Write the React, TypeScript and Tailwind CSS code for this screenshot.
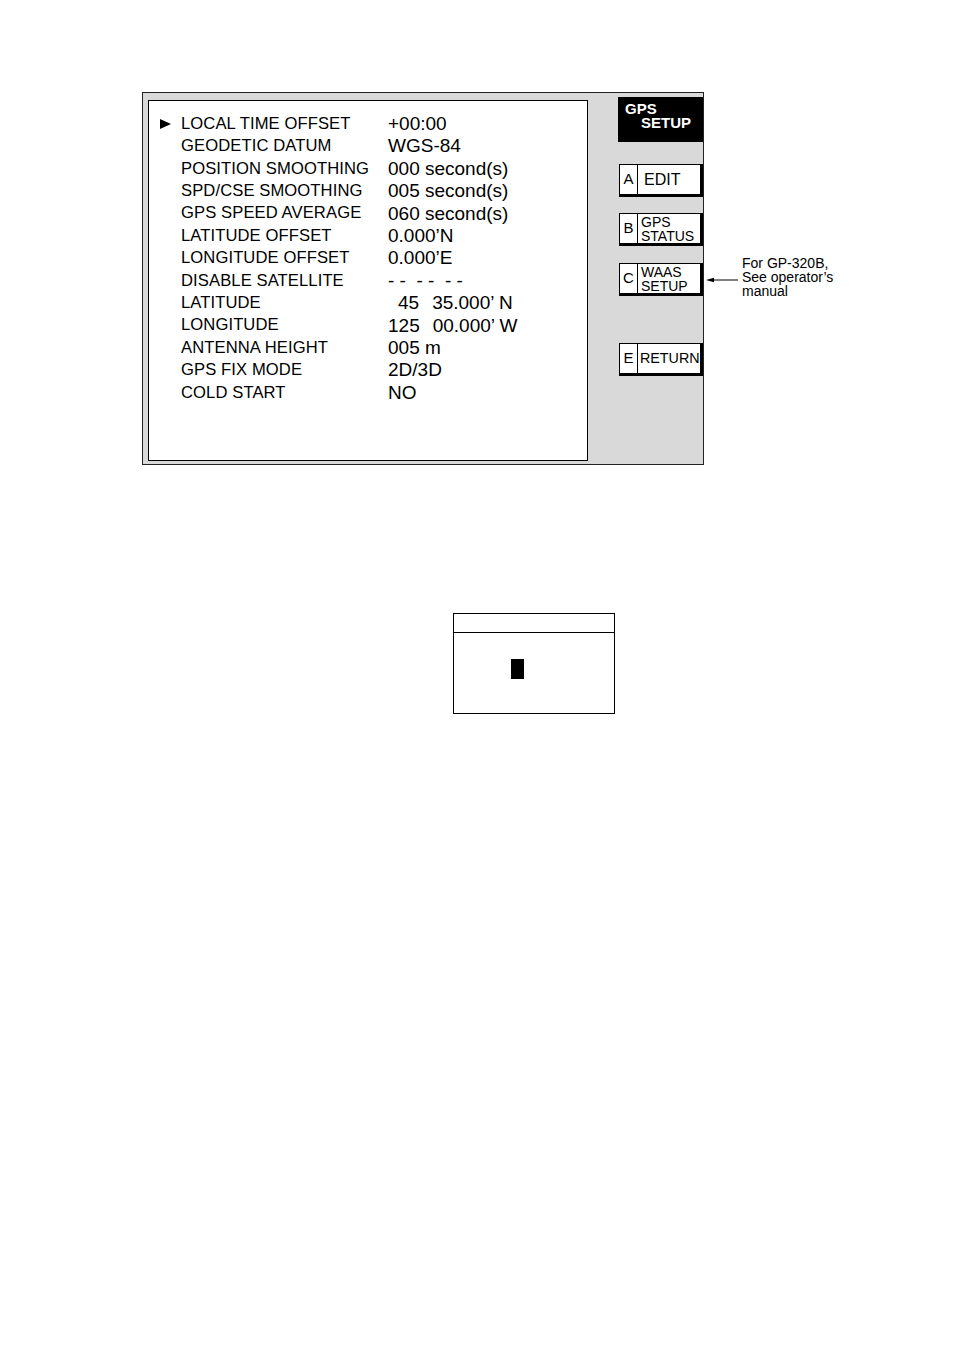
import React from 'react';

const rows: [string, React.ReactNode][] = [
  ['LOCAL TIME OFFSET', '+00:00'],
  ['GEODETIC DATUM', 'WGS-84'],
  ['POSITION SMOOTHING', '000 second(s)'],
  ['SPD/CSE SMOOTHING', '005 second(s)'],
  ['GPS SPEED AVERAGE', '060 second(s)'],
  ['LATITUDE OFFSET', '0.000’N'],
  ['LONGITUDE OFFSET', '0.000’E'],
  ['DISABLE SATELLITE', '- -  - -  - -'],
  [
    'LATITUDE',
    <>
      <span className="pl-[10px]">45</span>
      <span className="pl-[13px]">35.000’ N</span>
    </>,
  ],
  [
    'LONGITUDE',
    <>
      <span>125</span>
      <span className="pl-[13px]">00.000’ W</span>
    </>,
  ],
  ['ANTENNA HEIGHT', '005 m'],
  ['GPS FIX MODE', '2D/3D'],
  ['COLD START', 'NO'],
];

const SoftKey: React.FC<{ k: string; children: React.ReactNode; className?: string; textClass?: string }> = ({
  k,
  children,
  className = '',
  textClass = '',
}) => (
  <div
    className={`flex w-[84px] h-[33px] bg-white border border-black border-r-[3px] border-b-[3px] ml-[1px] ${className}`}
  >
    <div className="w-[18px] shrink-0 border-r border-black flex items-center justify-center text-[15px]">{k}</div>
    <div className={`flex flex-col justify-center ${textClass}`}>{children}</div>
  </div>
);

export default function App() {
  return (
    <div className="w-[954px] h-[1351px] bg-white text-black font-['Liberation_Sans',Arial,sans-serif] pt-[92px]">
      <div className="flex ml-[142px]">
        {/* main screen frame */}
        <div className="flex w-[562px] h-[373px] border border-[#222] bg-[#d9d9d9]">
          <div className="ml-[5px] mt-[7px] w-[440px] h-[361px] border border-black bg-white pt-[12px]">
            {rows.map(([label, value], i) => (
              <div key={label} className="flex items-center h-[22.42px]">
                <div className="w-[32px] shrink-0 pl-[11px] flex items-center">
                  {i === 0 && (
                    <svg width="11" height="10" viewBox="0 0 11 10">
                      <path d="M0 0 L11 5 L0 10 Z" fill="black" />
                    </svg>
                  )}
                </div>
                <div className="w-[207px] shrink-0 text-[16.6px] tracking-[0.1px]">{label}</div>
                <div className="text-[19px] whitespace-pre">{value}</div>
              </div>
            ))}
          </div>

          <div className="ml-[30px] flex flex-col">
            <div className="mt-[4px] w-[85px] h-[45px] bg-black text-white font-bold text-[15px] leading-[14px] pt-[5px] pl-[7px]">
              <div>GPS</div>
              <div className="pl-[16px]">SETUP</div>
            </div>
            <SoftKey k="A" className="mt-[22px]" textClass="pl-[6px] text-[16px]">
              EDIT
            </SoftKey>
            <SoftKey k="B" className="mt-[16px] h-[32px]" textClass="pl-[3px] text-[14px] leading-[14px]">
              <span>GPS</span>
              <span>STATUS</span>
            </SoftKey>
            <SoftKey k="C" className="mt-[17px]" textClass="pl-[3px] text-[14px] leading-[14px]">
              <span>WAAS</span>
              <span>SETUP</span>
            </SoftKey>
            <SoftKey k="E" className="mt-[47px]" textClass="pl-[2px] text-[14.3px]">
              RETURN
            </SoftKey>
          </div>
        </div>

        {/* annotation */}
        <div className="flex items-start pt-[164px]">
          <svg width="38" height="10" viewBox="0 0 38 10" className="mt-[19px]">
            <line x1="8" y1="5" x2="34" y2="5" stroke="black" strokeWidth="1" />
            <path d="M2 5 L10 2.8 L10 7.2 Z" fill="black" />
          </svg>
          <div className="text-[14px] leading-[14px]">
            <div>For GP-320B,</div>
            <div>See operator’s</div>
            <div>manual</div>
          </div>
        </div>
      </div>

      {/* input box */}
      <div className="ml-[453px] mt-[148px] w-[162px] h-[101px] border-[1.5px] border-black flex flex-col">
        <div className="h-[19px] border-b border-black" />
        <div className="flex-1 pt-[26px] pl-[57px]">
          <div className="w-[13px] h-[20px] bg-black" />
        </div>
      </div>
    </div>
  );
}
